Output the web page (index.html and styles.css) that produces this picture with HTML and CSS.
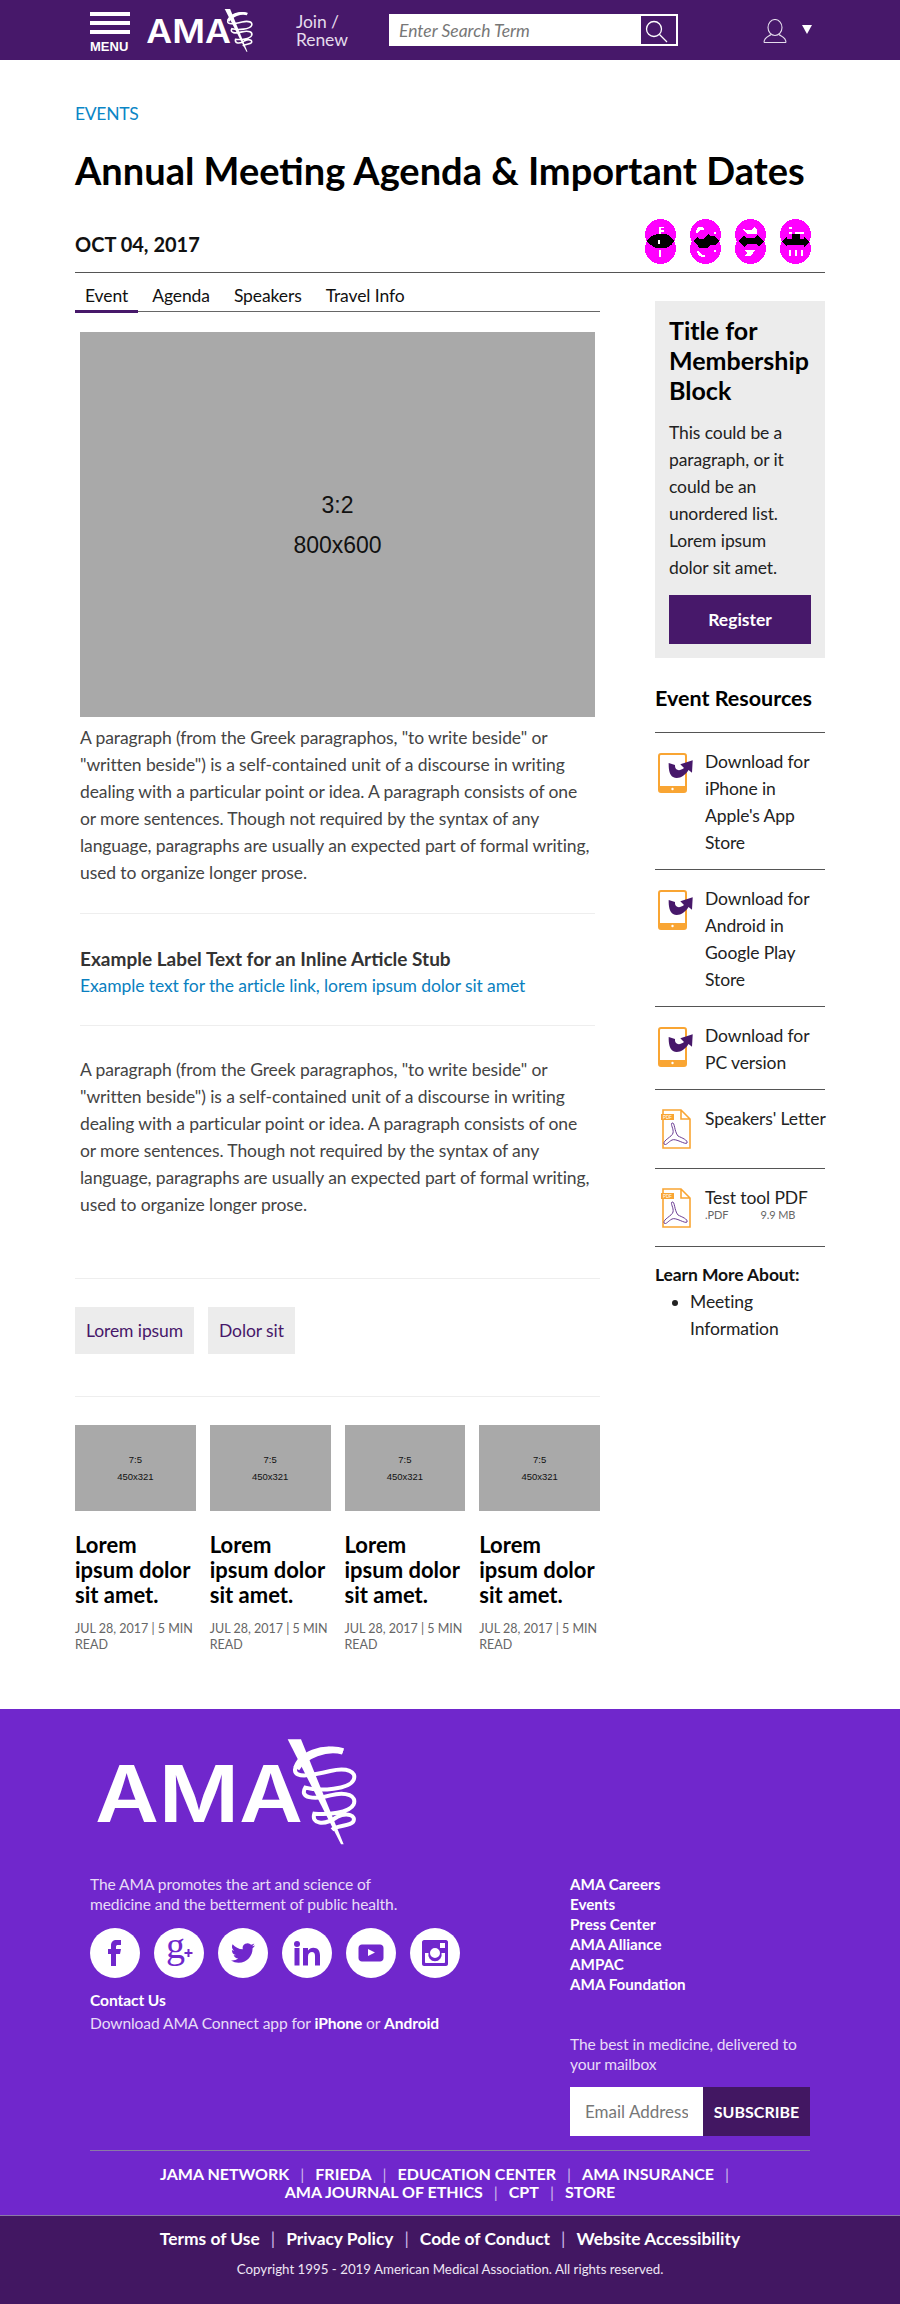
FILE: index.html
```html
<!DOCTYPE html>
<html lang="en">
  <head>
    <meta charset="UTF-8" />
    <meta name="viewport" content="width=device-width, initial-scale=1.0" />
    <title>Annual Meeting Agenda &amp; Important Dates</title>
    <link rel="stylesheet" href="styles.css">
  </head>
  <body>
    <!-- shared drawings -->
    <svg class="defs" width="0" height="0">
      <defs>
        <g id="snake">
          <polygon points="682,117 722,117 850,432 842,432" fill="#fff" />
          <path d="M848 153 C790 130 712 160 704 208 C702 236 760 224 810 212 C860 200 890 214 880 238 C868 266 780 274 735 262 C716 292 760 300 810 285 C860 272 890 288 880 312 C868 338 800 344 762 340 C752 370 790 378 830 350 C860 335 890 345 878 365 C868 378 830 374 815 388" fill="none" stroke="#fff" stroke-width="12" />
          <path d="M848 153 C800 138 730 165 708 205" fill="none" stroke="#fff" stroke-width="20" />
        </g>
        <g id="pdf-sheet">
          <path d="M2 1 H20 L29 10 V39 H2Z M20 1 V10 H29" fill="#fff" stroke="#f9a533" stroke-width="1.6" />
          <rect x="0" y="5" width="13" height="6" fill="#f9a533" />
          <path d="M11 14 C14 13 13 22 17 27 C21 29 27 31 26 34 C24 36 15 29 11 31 C7 33 5 37 3 35 C2 31 11 28 12 24 C13 20 9 15 11 14Z" fill="none" stroke="#6b3d94" stroke-width="1" />
        </g>
      </defs>
      <symbol id="phone" viewBox="0 0 35 40">
        <rect x="1" y="1" width="27" height="38" rx="2" fill="#fff" stroke="#f9a533" stroke-width="2" />
        <rect x="1" y="33" width="27" height="6" fill="#f9a533" />
        <circle cx="14.5" cy="36" r="1.2" fill="#fff" />
        <path d="M10.7 10 L17 12 C16.5 17 21 19 26 15 L22.3 11.3 L34.7 7.3 L34 19.7 L30.5 17 C27 23 20 27 15 24 C11.5 22 10.5 16 10.7 10Z" fill="#47186a" />
      </symbol>
    </svg>

    <header class="topbar">
      <a class="menu-btn">
        <span class="bar"></span><span class="bar"></span><span class="bar"></span>
        <span class="menu-label">MENU</span>
      </a>
      <svg class="top-logo" viewBox="95 110 810 330">
        <text x="105" y="365" class="logo-text" font-size="237" textLength="622" lengthAdjust="spacingAndGlyphs">AMA</text>
        <use href="#snake" />
      </svg>
      <a class="join">Join /<br />Renew</a>
      <form class="search">
        <input type="text" placeholder="Enter Search Term" />
        <button type="button" class="search-btn">
          <svg width="35" height="28" viewBox="0 0 35 28"><circle cx="13" cy="13" r="7.5" fill="none" stroke="#fff" stroke-width="1.3" /><line x1="18.5" y1="18.5" x2="26" y2="26" stroke="#fff" stroke-width="1.3" /></svg>
        </button>
      </form>
      <svg class="user-icon" width="24" height="24" viewBox="0 0 24 24"><ellipse cx="12" cy="8.5" rx="7" ry="8" fill="none" stroke="#e4dcec" stroke-width="1.1" /><path d="M1 23.5 C1 18 6 17.5 8 15.5 M23 23.5 C23 18 18 17.5 16 15.5 M1 23.5 H23" fill="none" stroke="#e4dcec" stroke-width="1.1" /></svg>
      <svg class="caret" width="10" height="9" viewBox="0 0 10 9"><polygon points="0,0 10,0 5,9" fill="#fff" /></svg>
    </header>

    <main class="page">
      <a class="eyebrow">EVENTS</a>
      <h1>Annual Meeting Agenda &amp; Important Dates</h1>
      <div class="date-row">
        <span class="date">OCT 04, 2017</span>
        <div class="share">
          <svg width="31" height="45" viewBox="0 0 31 45" shape-rendering="crispEdges">
            <circle cx="15.5" cy="15.5" r="15.5" fill="#f0f" /><circle cx="15.5" cy="29.5" r="15.5" fill="#f0f" />
            <path d="M2 22 C6 15 10 16 14 15 H18 C23 15 26 17 29 22 C26 28 22 29 18 29 H14 C9 29 6 27 2 22Z" />
            <path d="M14 8 H19 V9 H16 V11 H19 V13 H16 V15 H14Z M14 31 H16 V38 H14Z M13 21 H15 V25 H13Z" fill="#fff" />
          </svg>
          <svg width="31" height="45" viewBox="0 0 31 45" shape-rendering="crispEdges">
            <circle cx="15.5" cy="15.5" r="15.5" fill="#f0f" /><circle cx="15.5" cy="29.5" r="15.5" fill="#f0f" />
            <path d="M3 22 L7 18 L9 20 H14 L18 15 L20 17 H24 L29 22 L25 26 H20 L18 29 H9 L8 26 L3 22Z" />
            <path d="M7 9 C9 8 12 8 14 9 V11 C11 10 9 11 8 14 H6 Z M7 32 H9 C10 35 12 36 15 36 V38 C11 38 7 37 7 32Z M24 13 H26 V15 H24Z M24 31 H26 V33 H24Z" fill="#fff" />
          </svg>
          <svg width="31" height="45" viewBox="0 0 31 45" shape-rendering="crispEdges">
            <circle cx="15.5" cy="15.5" r="15.5" fill="#f0f" /><circle cx="15.5" cy="29.5" r="15.5" fill="#f0f" />
            <path d="M3 22 L9 16 L11 19 H19 L22 16 L29 22 L24 28 L21 25 H12 L9 28Z" />
            <path d="M8 10 L12 11 L17 11 L19 8 L22 10 V15 H12Z M9 31 H20 L16 37 H9 L12 34Z" fill="#fff" />
          </svg>
          <svg width="31" height="45" viewBox="0 0 31 45" shape-rendering="crispEdges">
            <circle cx="15.5" cy="15.5" r="15.5" fill="#f0f" /><circle cx="15.5" cy="29.5" r="15.5" fill="#f0f" />
            <path d="M2 23 L7 17 V20 H12 V15 H20 V20 H24 V17 L29 23 L24 28 V26 H7 V28Z" />
            <path d="M9 8 H12 V10 H9Z M9 13 H12 V15 H9Z M15 13 H24 V15 H15Z M9 31 H11 V37 H9Z M15 31 H17 V37 H15Z M21 31 H23 V37 H21Z" fill="#fff" />
          </svg>
        </div>
      </div>

      <div class="columns">
        <div class="main-col">
          <nav class="tabs">
            <a class="tab active">Event</a>
            <a class="tab">Agenda</a>
            <a class="tab">Speakers</a>
            <a class="tab">Travel Info</a>
          </nav>

          <article class="article">
            <div class="hero-img"><span>3:2</span><span>800x600</span></div>
            <p class="para first">A paragraph (from the Greek paragraphos, "to write beside" or "written beside") is a self-contained unit of a discourse in writing dealing with a particular point or idea. A paragraph consists of one or more sentences. Though not required by the syntax of any language, paragraphs are usually an expected part of formal writing, used to organize longer prose.</p>
            <div class="stub">
              <div class="stub-label">Example Label Text for an Inline Article Stub</div>
              <a class="stub-link">Example text for the article link, lorem ipsum dolor sit amet</a>
            </div>
            <p class="para">A paragraph (from the Greek paragraphos, "to write beside" or "written beside") is a self-contained unit of a discourse in writing dealing with a particular point or idea. A paragraph consists of one or more sentences. Though not required by the syntax of any language, paragraphs are usually an expected part of formal writing, used to organize longer prose.</p>
          </article>

          <div class="tags">
            <a class="tag">Lorem ipsum</a>
            <a class="tag">Dolor sit</a>
          </div>

          <div class="cards">
            <div class="card">
              <div class="thumb"><span>7:5</span><span>450x321</span></div>
              <h3>Lorem<br />ipsum dolor sit amet.</h3>
              <div class="meta">JUL 28, 2017 | 5 MIN READ</div>
            </div>
            <div class="card">
              <div class="thumb"><span>7:5</span><span>450x321</span></div>
              <h3>Lorem<br />ipsum dolor sit amet.</h3>
              <div class="meta">JUL 28, 2017 | 5 MIN READ</div>
            </div>
            <div class="card">
              <div class="thumb"><span>7:5</span><span>450x321</span></div>
              <h3>Lorem<br />ipsum dolor sit amet.</h3>
              <div class="meta">JUL 28, 2017 | 5 MIN READ</div>
            </div>
            <div class="card">
              <div class="thumb"><span>7:5</span><span>450x321</span></div>
              <h3>Lorem<br />ipsum dolor sit amet.</h3>
              <div class="meta">JUL 28, 2017 | 5 MIN READ</div>
            </div>
          </div>
        </div>

        <aside class="sidebar">
          <div class="member">
            <h2>Title for Membership Block</h2>
            <p>This could be a paragraph, or it could be an unordered list. Lorem ipsum<br />dolor sit amet.</p>
            <a class="register">Register</a>
          </div>

          <h3 class="res-title">Event Resources</h3>
          <ul class="resources">
            <li><svg class="res-icon"><use href="#phone" /></svg><span>Download for iPhone in Apple's App Store</span></li>
            <li><svg class="res-icon"><use href="#phone" /></svg><span>Download for Android in Google Play Store</span></li>
            <li><svg class="res-icon"><use href="#phone" /></svg><span>Download for PC version</span></li>
            <li class="file"><svg class="res-icon pdf-icon" viewBox="0 0 30 40"><use href="#pdf-sheet" /><text x="2" y="10" class="pdf-tag">PDF</text></svg><span class="nowrap">Speakers' Letter</span></li>
            <li class="file"><svg class="res-icon pdf-icon" viewBox="0 0 30 40"><use href="#pdf-sheet" /><text x="2" y="10" class="pdf-tag">PDF</text></svg>
              <div>
                <span class="nowrap">Test tool PDF</span>
                <div class="file-info"><span>.PDF</span><span>9.9 MB</span></div>
              </div>
            </li>
          </ul>

          <div class="learn">Learn More About:</div>
          <ul class="learn-list">
            <li>Meeting Information</li>
          </ul>
        </aside>
      </div>
    </main>

    <footer class="footer">
      <div class="footer-main">
        <svg class="foot-logo" viewBox="95 110 810 330">
          <text x="105" y="365" class="logo-text" font-size="237" textLength="622" lengthAdjust="spacingAndGlyphs">AMA</text>
          <use href="#snake" />
        </svg>
        <div class="foot-cols">
          <div class="foot-left">
            <p class="mission">The AMA promotes the art and science of<br />medicine and the betterment of public health.</p>
            <div class="social">
              <a class="circle"><svg width="50" height="50" viewBox="0 0 50 50"><path d="M21 38 V26 H18 V21 H21 V17.5 C21 14 23 12 26.5 12 H31 V17 H28 C26.6 17 26 17.6 26 19 V21 H31 L30 26 H26 V38Z" /></svg></a>
              <a class="circle"><svg width="50" height="50" viewBox="0 0 50 50"><text x="12" y="30" class="gplus">g</text><path d="M33.5 21 h2 v3 h3 v2 h-3 v3 h-2 v-3 h-3 v-2 h3Z" /></svg></a>
              <a class="circle"><svg width="50" height="50" viewBox="-13 -13 50 50"><path d="M23.953 4.57a10 10 0 01-2.825.775 4.958 4.958 0 002.163-2.723c-.951.555-2.005.959-3.127 1.184a4.92 4.92 0 00-8.384 4.482C7.69 8.095 4.067 6.13 1.64 3.162a4.822 4.822 0 00-.666 2.475c0 1.71.87 3.213 2.188 4.096a4.904 4.904 0 01-2.228-.616v.06a4.923 4.923 0 003.946 4.827 4.996 4.996 0 01-2.212.085 4.936 4.936 0 004.604 3.417 9.867 9.867 0 01-6.102 2.105c-.39 0-.779-.023-1.17-.067a13.995 13.995 0 007.557 2.209c9.053 0 13.998-7.496 13.998-13.985 0-.21 0-.42-.015-.63A9.935 9.935 0 0024 4.59z" /></svg></a>
              <a class="circle"><svg width="50" height="50" viewBox="0 0 50 50"><circle cx="15" cy="16" r="3" /><rect x="12.5" y="20" width="5" height="17.5" /><path d="M21 20 H26 V22.5 C27.2 20.8 29 19.7 31.3 19.7 C35.6 19.7 38 22.4 38 27.4 V37.5 H33 V28 C33 25.5 32 24 30 24 C27.8 24 26 25.5 26 28.5 V37.5 H21Z" /></svg></a>
              <a class="circle"><svg width="50" height="50" viewBox="0 0 50 50"><path fill-rule="evenodd" d="M16 16.5 H34 C36 16.5 37.5 18 37.5 20 V30 C37.5 32 36 33.5 34 33.5 H16 C14 33.5 12.5 32 12.5 30 V20 C12.5 18 14 16.5 16 16.5Z M22 21 V28 L29 24.5Z" /></svg></a>
              <a class="circle"><svg width="50" height="50" viewBox="0 0 50 50"><path fill-rule="evenodd" d="M14 12 H36 C37 12 38 13 38 14 V36 C38 37 37 38 36 38 H14 C13 38 12 37 12 36 V14 C12 13 13 12 14 12Z M15 25 V34 C15 34.6 15.4 35 16 35 H34 C34.6 35 35 34.6 35 34 V25 H31.5 A6.7 6.7 0 1 1 18.5 25Z M30 15 V20 H35 V15Z M25 20 A5 5 0 1 0 25 30 A5 5 0 1 0 25 20Z" /></svg></a>
            </div>
            <a class="contact">Contact Us</a>
            <p class="connect">Download AMA Connect app for <b>iPhone</b> or <b>Android</b></p>
          </div>
          <div class="foot-right">
            <ul class="foot-links">
              <li>AMA Careers</li>
              <li>Events</li>
              <li>Press Center</li>
              <li>AMA Alliance</li>
              <li>AMPAC</li>
              <li>AMA Foundation</li>
            </ul>
            <p class="mailbox">The best in medicine, delivered to your mailbox</p>
            <form class="subscribe">
              <input type="text" placeholder="Email Address" />
              <button type="button">SUBSCRIBE</button>
            </form>
          </div>
        </div>
        <nav class="partner-nav">
          <a>JAMA NETWORK</a><i>|</i><a>FRIEDA</a><i>|</i><a>EDUCATION CENTER</a><i>|</i><a>AMA INSURANCE</a><i>|</i><br />
          <a>AMA JOURNAL OF ETHICS</a><i>|</i><a>CPT</a><i>|</i><a>STORE</a>
        </nav>
      </div>
      <div class="footer-bottom">
        <nav class="legal-nav">
          <a>Terms of Use</a><i>|</i><a>Privacy Policy</a><i>|</i><a>Code of Conduct</a><i>|</i><a>Website Accessibility</a>
        </nav>
        <p class="copyright">Copyright 1995 - 2019 American Medical Association. All rights reserved.</p>
      </div>
    </footer>
  </body>
</html>
```

FILE: styles.css
```css
* {
  box-sizing: border-box;
}

body {
  margin: 0;
  width: 900px;
  font-family: "Lato", "Noto Sans", sans-serif;
  font-size: 18px;
  color: #111;
  background: #fff;
}

a {
  color: inherit;
  text-decoration: none;
}

p,
h1,
h2,
h3,
ul {
  margin: 0;
  padding: 0;
}

ul {
  list-style: none;
}

.defs {
  display: block;
  height: 0;
}

.logo-text {
  font-family: "Inter", "Liberation Sans", sans-serif;
  font-weight: 600;
  fill: #fff;
}

.pdf-tag {
  font-family: "Liberation Sans", sans-serif;
  font-size: 4.5px;
  fill: #fff;
}

/* running text is set a little tighter */
.para,
.tab,
.tag,
.stub-link,
.member p,
.resources li,
.learn,
.learn-list,
.eyebrow,
.join {
  font-size: 17.5px;
  letter-spacing: -0.1px;
}

/* top bar */
.topbar {
  display: flex;
  align-items: flex-start;
  height: 60px;
  padding-left: 90px;
  background: #47186a;
  color: #fff;
}

.menu-btn {
  display: block;
  width: 40px;
  padding-top: 12px;
}

.bar {
  display: block;
  height: 4px;
  margin-bottom: 5px;
  background: #fff;
}

.menu-label {
  display: block;
  margin-top: 6px;
  font-family: "Liberation Sans", sans-serif;
  font-size: 13px;
  line-height: 13px;
  font-weight: bold;
}

.top-logo {
  width: 110px;
  height: 45px;
  margin: 8px 0 0 15px;
}

.join {
  width: 93px;
  margin: 13px 0 0 41px;
  line-height: 18px;
  color: #e4dcec;
}

.search {
  display: flex;
  justify-content: space-between;
  width: 289px;
  height: 32px;
  margin-top: 14px;
  padding: 2px;
  background: #fff;
}

.search input {
  width: 240px;
  border: 0;
  outline: 0;
  padding: 0 0 0 8px;
  font: italic 17.5px "Lato", sans-serif;
}

.search input::placeholder {
  color: #777;
}

.search-btn {
  width: 35px;
  height: 28px;
  padding: 0;
  border: 0;
  background: #47186a;
}

.search-btn svg {
  display: block;
}

.user-icon {
  margin: 19px 0 0 85px;
}

.caret {
  margin: 25px 0 0 15px;
}

/* page head */
.page {
  padding: 44px 75px 56px;
}

.eyebrow {
  display: block;
  line-height: 20px;
  letter-spacing: -0.3px;
  color: #0a86c6;
}

h1 {
  margin-top: 24px;
  font-size: 38px;
  line-height: 44px;
  font-weight: 700;
  color: #000;
}

.date-row {
  display: flex;
  justify-content: space-between;
  align-items: center;
  margin-top: 27px;
  padding: 0 14px 8px 0;
  border-bottom: 1px solid #555;
}

.date {
  padding-top: 5px;
  font-size: 20px;
  font-weight: 700;
  color: #111;
}

.share {
  display: flex;
  gap: 14px;
}

.share svg {
  display: block;
}

/* columns */
.columns {
  display: flex;
  justify-content: space-between;
  align-items: flex-start;
}

.main-col {
  width: 525px;
}

.sidebar {
  width: 170px;
  margin-top: 28px;
}

.tabs {
  display: flex;
  gap: 4px;
  height: 39px;
  border-bottom: 1px solid #666;
}

.tab {
  height: 40px;
  padding: 9px 10px 0;
  line-height: 27px;
}

.tab.active {
  border-bottom: 3px solid #47186a;
}

.article {
  padding: 20px 5px 0;
}

.hero-img,
.thumb {
  display: flex;
  flex-direction: column;
  align-items: center;
  justify-content: center;
  background: #a9a9a9;
  font-family: "Liberation Sans", sans-serif;
  color: #111;
}

.hero-img {
  height: 385px;
  font-size: 23px;
  line-height: 40px;
}

.para {
  line-height: 27px;
  color: #444;
}

.para.first {
  margin-top: 7px;
}

.stub {
  margin-top: 27px;
  padding: 31px 0 26px;
  margin-bottom: 30px;
  border-top: 1px solid #eee;
  border-bottom: 1px solid #eee;
  line-height: 27px;
}

.stub-label {
  font-size: 19px;
  font-weight: 700;
  color: #333;
}

.stub-link {
  color: #0a7fc0;
}

.tags {
  display: flex;
  gap: 14px;
  margin-top: 60px;
  padding: 28px 0 42px;
  border-top: 1px solid #eee;
  border-bottom: 1px solid #eee;
}

.tag {
  height: 47px;
  padding: 0 11px;
  line-height: 47px;
  background: #ececec;
  color: #47186a;
}

.cards {
  display: grid;
  grid-template-columns: repeat(4, 1fr);
  gap: 14px;
  margin-top: 28px;
}

.thumb {
  height: 86px;
  font-size: 9.5px;
  line-height: 17px;
}

.card h3 {
  margin-top: 21px;
  font-size: 22px;
  line-height: 25px;
  font-weight: 700;
  color: #000;
}

.meta {
  margin-top: 14px;
  font-size: 12.5px;
  line-height: 16px;
  color: #666;
}

/* sidebar */
.member {
  padding: 14px;
  background: #ececec;
}

.member h2 {
  font-size: 25px;
  line-height: 30px;
  font-weight: 700;
  color: #000;
}

.member p {
  margin-top: 14px;
  line-height: 27px;
  color: #222;
}

.register {
  display: block;
  height: 49px;
  margin-top: 14px;
  line-height: 49px;
  text-align: center;
  font-weight: 700;
  font-size: 17.5px;
  color: #fff;
  background: #47186a;
}

.res-title {
  margin: 26px 0 20px;
  font-size: 21.5px;
  line-height: 28px;
  font-weight: 700;
  color: #000;
}

.resources li {
  display: flex;
  padding: 15px 0 13px;
  border-top: 1px solid #555;
  line-height: 27px;
  color: #222;
}

.resources li:last-child {
  border-bottom: 1px solid #555;
}

.resources li.file {
  min-height: 79px;
}

.res-icon {
  flex: none;
  width: 35px;
  height: 40px;
  margin: 5px 12px 0 3px;
}

.res-icon.pdf-icon {
  width: 30px;
  margin: 4px 14px 0 6px;
}

.nowrap {
  white-space: nowrap;
}

.file-info {
  display: flex;
  gap: 32px;
  margin-top: -2px;
  font-size: 11px;
  line-height: 12px;
  color: #666;
}

.learn {
  margin-top: 14px;
  font-weight: 700;
  line-height: 27px;
}

.learn-list {
  list-style: disc;
  padding-left: 35px;
  line-height: 27px;
  color: #222;
}

/* footer */
.footer {
  background: #7027cc;
  color: #fff;
}

.footer-main {
  height: 506px;
  padding: 28px 90px 0;
}

.foot-logo {
  display: block;
  width: 270px;
  height: 110px;
  margin-left: 2px;
}

.foot-cols {
  display: flex;
  justify-content: space-between;
  height: 277px;
  margin-top: 27px;
  border-bottom: 1px solid #8a7aa6;
}

.foot-left {
  width: 480px;
}

.foot-right {
  width: 240px;
}

.mission,
.mailbox,
.connect,
.contact {
  font-size: 15.6px;
  letter-spacing: -0.1px;
  line-height: 20px;
}

.mission,
.mailbox,
.connect {
  color: #e8dcf7;
}

.social {
  display: flex;
  gap: 14px;
  margin-top: 14px;
}

.circle {
  display: block;
  width: 50px;
  height: 50px;
  border-radius: 50%;
  background: #fff;
}

.circle svg {
  display: block;
  fill: #7027cc;
}

.gplus {
  font-family: "Liberation Serif", serif;
  font-size: 38px;
  fill: #7027cc;
}

.contact {
  display: block;
  margin-top: 12px;
  font-weight: 700;
}

.connect {
  margin-top: 3px;
}

.connect b {
  color: #fff;
}

.foot-links {
  font-size: 15.2px;
  line-height: 20px;
  font-weight: 700;
}

.mailbox {
  margin-top: 40px;
}

.subscribe {
  display: flex;
  height: 49px;
  margin-top: 13px;
}

.subscribe input {
  width: 133px;
  border: 0;
  outline: 0;
  padding: 0 15px;
  font: 17px "Lato", sans-serif;
  background: #fff;
}

.subscribe input::placeholder {
  color: #777;
}

.subscribe button {
  width: 107px;
  padding: 0;
  border: 0;
  background: #421762;
  color: #fff;
  font: bold 16px "Lato", sans-serif;
}

.partner-nav,
.legal-nav {
  text-align: center;
  font-weight: 700;
  line-height: 18px;
}

.partner-nav {
  margin-top: 14px;
  font-size: 16px;
}

.legal-nav {
  font-size: 17.4px;
}

.partner-nav i,
.legal-nav i {
  margin: 0 11px;
  font-style: normal;
  font-weight: 400;
  color: #cdb8ea;
}

.footer-bottom {
  height: 89px;
  padding-top: 14px;
  background: #421762;
  border-top: 1px solid #8a7aa6;
}

.copyright {
  margin-top: 12px;
  text-align: center;
  font-size: 13.3px;
  line-height: 18px;
  color: #eee6f5;
}
```
